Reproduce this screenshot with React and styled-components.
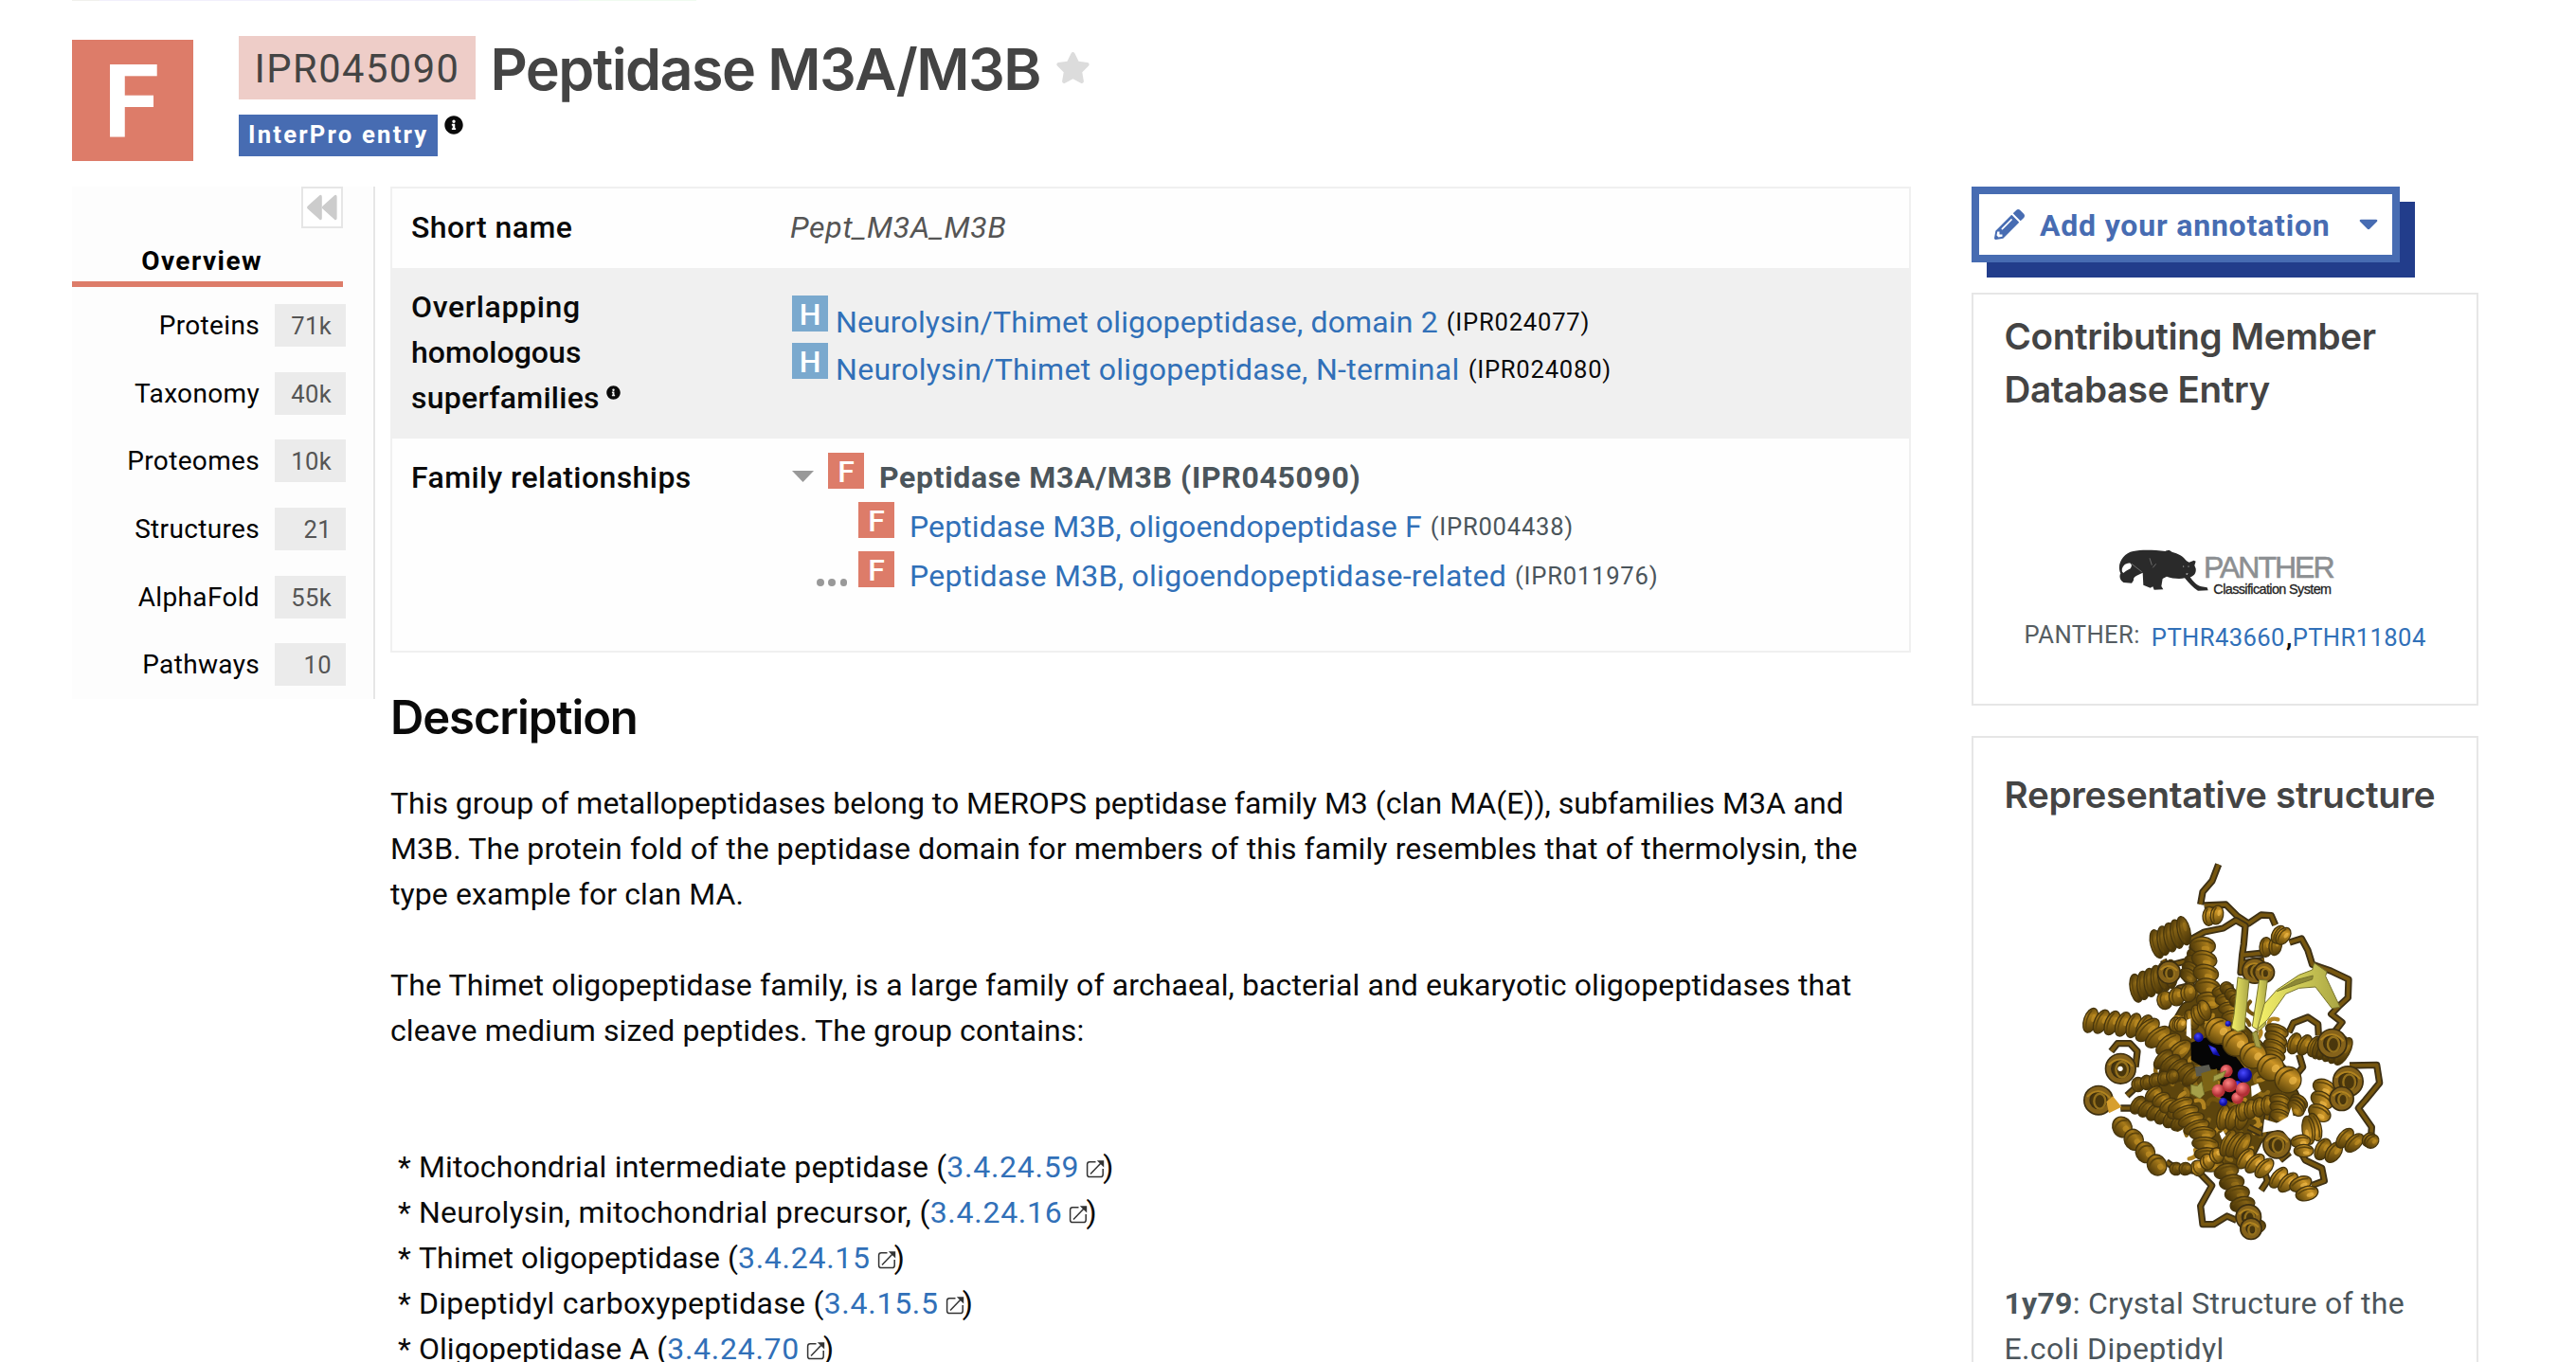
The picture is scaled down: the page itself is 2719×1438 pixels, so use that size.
import React from "react";
import styled, { createGlobalStyle } from "styled-components";
import { FaStar, FaInfoCircle, FaPencilAlt } from "react-icons/fa";

const family = "#dd7c69";
const superfamily = "#7aa9ce";
const link = "#3170b8";
const brand = "#476cb2";
const rule = "#e6e6e6";
const bodyFont = `Roboto, "Liberation Sans", sans-serif`;
const headFont = `Inter, "Liberation Sans", sans-serif`;

const Global = createGlobalStyle`
  * { box-sizing: border-box; }
  body { margin: 0; background: #fff; color: #0a0a0a; overflow: hidden; font: 32px/48px ${bodyFont}; }
  h1, h2, h3, p, ul { margin: 0; padding: 0; }
  ul { list-style: none; }
  a { color: ${link}; text-decoration: none; }
  svg { display: block; flex: none; }
`;

const Page = styled.div`
  height: 1438px;
  overflow: hidden;
  padding-left: 76px;
  white-space: nowrap;
`;
const Strip = styled.div`
  display: flex;
  height: 1px;
`;
const Segment = styled.div`
  width: ${(p) => p.$width}px;
  background: ${(p) => p.$color};
`;

/* Header */
const Header = styled.header`
  display: flex;
  gap: 48px;
  padding-top: 37px;
  margin-bottom: 27px;
`;
const TypeLogo = styled.div`
  width: 128px;
  height: 128px;
  margin-top: 4px;
  padding-right: 3px;
  background: ${family};
  color: #fff;
  font-size: 107px;
  font-weight: 700;
  line-height: 133px;
  text-align: center;
`;
const TitleRow = styled.div`
  display: flex;
  height: 67px;
`;
const Accession = styled.div`
  width: 250px;
  background: #eecdc8;
  color: #444;
  font-size: 41.6px;
  letter-spacing: 0.036em;
  line-height: 70px;
  text-align: center;
`;
const Title = styled.h1`
  margin: 0 16px 0 15.5px;
  color: #444;
  font: 600 61px/71px ${headFont};
  letter-spacing: -0.026em;
`;
const Star = styled(FaStar)`
  width: 37px;
  height: 37px;
  margin-top: 15px;
  color: #dcdcdc;
`;
const SourceRow = styled.div`
  display: flex;
  margin-top: 16px;
`;
const SourceTag = styled.div`
  width: 210px;
  height: 44px;
  padding-left: 10px;
  background: ${brand};
  color: #fff;
  font-size: 25.6px;
  font-weight: 700;
  letter-spacing: 0.087em;
  line-height: 43px;
`;
const Info = styled(FaInfoCircle)`
  width: ${(p) => p.$size}px;
  height: ${(p) => p.$size}px;
  margin: ${(p) => p.$margin};
`;

/* Columns */
const Body = styled.div`
  display: flex;
  align-items: flex-start;
`;
const Sidebar = styled.nav`
  flex: none;
  width: 320px;
  height: 541px;
  border-right: 2px solid ${rule};
  background: #fdfdfd;
`;
const Collapse = styled.button`
  display: flex;
  align-items: center;
  justify-content: center;
  width: 44px;
  height: 44px;
  margin: 0 0 0 242px;
  padding: 0;
  border: 2px solid ${rule};
  background: #fff;
`;
const ActiveTab = styled.div`
  width: 286px;
  height: 62px;
  margin-bottom: 5px;
  padding: 13px 85px 0 0;
  border-bottom: 6px solid ${family};
  color: #000;
  font-size: 28px;
  font-weight: 700;
  letter-spacing: 0.052em;
  line-height: 43px;
  text-align: right;
`;
const Tab = styled.li`
  display: flex;
  align-items: center;
  justify-content: flex-end;
  gap: 16px;
  height: 71.6px;
  padding-right: 29px;
  color: #000;
  font-size: 28px;
  letter-spacing: 0.012em;
  line-height: 49px;
`;
const Badge = styled.span`
  width: 75px;
  height: 45px;
  padding-right: 15px;
  background: #ebebeb;
  color: #555;
  font-size: 25.6px;
  line-height: 47px;
  text-align: right;
`;

const Main = styled.main`
  flex: none;
  width: 1605px;
  margin-left: 16px;
`;
const Table = styled.section`
  border: 2px solid #f0f0f0;
  background: #fefefe;
`;
const Row = styled.div`
  display: grid;
  grid-template-columns: 422px 1fr;
  height: ${(p) => p.$height}px;
  background: ${(p) => (p.$shaded ? "#f0f0f0" : "transparent")};
`;
const Label = styled.div`
  padding: 17px 0 0 20px;
  font-weight: 500;
  letter-spacing: ${(p) => p.$track ?? 0.013}em;
`;
const LabelEnd = styled.span`
  display: flex;
`;
const Value = styled.div`
  padding-top: ${(p) => p.$top}px;
`;
const ShortName = styled.i`
  margin-left: -2px;
  color: #555;
  letter-spacing: 0.022em;
`;
const EntryRow = styled.div`
  display: flex;
  height: ${(p) => p.$height}px;
  line-height: ${(p) => p.$line}px;
`;
const EntryIcon = styled.span`
  flex: none;
  width: 38px;
  height: 38px;
  margin-right: ${(p) => p.$gap}px;
  background: ${(p) => p.$color};
  color: #fff;
  font-size: 32px;
  font-weight: 500;
  line-height: 40px;
  text-align: center;
`;
const Tracked = styled.span`
  letter-spacing: ${(p) => p.$track}em;
`;
const Code = styled.span`
  margin-left: 9px;
  color: ${(p) => p.$color};
  font-size: 25.6px;
  letter-spacing: 0.03em;
`;
const Current = styled.b`
  color: #4b555b;
  letter-spacing: 0.0205em;
`;
const Lead = styled.span`
  display: flex;
  align-items: flex-start;
  gap: 4.5px;
  width: ${(p) => p.$width}px;
  padding: ${(p) => p.$padding};
`;
const Dot = styled.span`
  width: 7.8px;
  height: 7.8px;
  border-radius: 50%;
  background: #999;
`;

const SectionTitle = styled.h2`
  margin: 39px 0 36px 0;
  font: 600 49px/60px ${headFont};
  letter-spacing: -0.023em;
`;
const Paragraph = styled.p`
  margin-bottom: ${(p) => p.$after}px;
`;
const Line = styled.span`
  display: block;
  letter-spacing: ${(p) => p.$track}em;
`;
const Enzyme = styled.li`
  display: flex;
  padding-left: 8px;
  letter-spacing: ${(p) => p.$track}em;
`;
const Asterisk = styled.span`
  width: 22px;
`;
const EcNumber = styled.a`
  letter-spacing: 0.023em;
`;

/* Right column */
const Aside = styled.aside`
  flex: none;
  width: 535px;
  margin-left: 64px;
`;
const Annotate = styled.button`
  display: flex;
  align-items: center;
  width: 452px;
  height: 80px;
  padding: 0 15px 0 16px;
  border: 8px solid ${brand};
  background: #fff;
  box-shadow: 16px 16px 0 #223d8b;
  color: ${brand};
  font: 700 32px/48px ${bodyFont};
  letter-spacing: 0.025em;
`;
const AnnotateText = styled.span`
  flex: 1;
  margin-left: 16px;
  padding-top: 2px;
  text-align: left;
`;
const Card = styled.section`
  height: ${(p) => p.$height}px;
  margin-top: 32px;
  padding: ${(p) => p.$top}px 31px 0 32.5px;
  border: 2px solid ${rule};
`;
const CardTitle = styled.h3`
  color: #444;
  font: 600 38.6px/56px ${headFont};
  letter-spacing: ${(p) => p.$track}em;
`;
const Brand = styled.div`
  display: flex;
  margin: 141px 0 0 119px;
`;
const BrandText = styled.div`
  flex: none;
  width: 135px;
  margin-left: -6px;
  font-family: "Liberation Sans", Arial, sans-serif;
  text-align: right;
`;
const BrandName = styled.div`
  display: flex;
  justify-content: flex-end;
  margin: 2px -2px 0 0;
  color: #8c8f92;
  font-size: 32px;
  line-height: 35px;
  letter-spacing: -2px;
  -webkit-text-stroke: 0.6px #8c8f92;
`;
const BrandSub = styled.div`
  color: #222;
  font-size: 14.4px;
  line-height: 10px;
  letter-spacing: -0.6px;
  -webkit-text-stroke: 0.3px #222;
`;
const Signatures = styled.div`
  display: flex;
  margin: 25px 0 0 21px;
  color: #555d62;
  font-size: 25.6px;
  line-height: 36px;
  letter-spacing: 0.016em;
`;
const SignatureLinks = styled.span`
  padding: 3px 0 0 12px;
`;
const Comma = styled.b`
  margin-left: 1px;
  color: #0a0a0a;
`;
const Structure = styled.div`
  margin: 13px 0 12px 44.5px;
`;
const Caption = styled.p`
  color: #4b555b;
`;

const ExternalIcon = () => (
  <svg width="20" height="48" viewBox="0 0 20 48" fill="none" stroke="#333" strokeWidth="1.5">
    <path d="M10.5 18.7H4.2a2.6 2.6 0 0 0-2.6 2.6v10.6a2.6 2.6 0 0 0 2.6 2.6h11.4a2.6 2.6 0 0 0 2.6-2.6V26" />
    <path d="M5 31.5 16.5 19.5" />
    <path d="M11.8 17.2h7.4v7.4z" fill="#333" stroke="none" />
  </svg>
);
const ExternalBox = styled.span`
  margin: 0 -2px 0 7px;
`;
const Rewind = () => (
  <svg width="34" height="30" viewBox="0 0 34 26" preserveAspectRatio="none" fill="#ccc">
    <path d="M14 2.2C15.200.9 16.800 1.400 16.800 3.200v19.600c0 1.800-1.600 2.300-2.800 1L1.800 14.400c-.9-.8-.9-2 0-2.800z" />
    <path d="M29.800 2.200c1.200-1.300 2.800-.8 2.800 1v19.600c0 1.800-1.600 2.300-2.800 1L17.600 14.400c-.9-.8-.9-2 0-2.800z" />
  </svg>
);
const Caret = () => (
  <svg width="20" height="12" viewBox="0 0 20 12" fill="currentColor">
    <path d="M2 .8h16c1.300 0 1.800 1.200.9 2.200l-7.500 7.600c-.8.8-2 .8-2.800 0L1.100 3C.2 2 .7.8 2 .8z" />
  </svg>
);
const Toggle = () => (
  <svg width="23" height="12" viewBox="0 0 23 12" fill="#999">
    <path d="M0 0h23L11.500 12z" />
  </svg>
);
const Panther = () => (
  <svg width="97" height="44" viewBox="48 34 291 132">
    <path
      fill="#2a2a2a"
      fillRule="evenodd"
      d="M98 40C125 34 165 36 200 40c6-5 15-4 20 2 20 5 37 14 47 29l8 4 15-6 6 3-4 13 4 10c2 14-6 24-18 27 10 14 22 27 36 30l18 3 3 9-32 1c-16-9-28-24-42-40-18 4-40 1-57-5l-13 7-4 24 6 10-29 1-4-10-8 4-22-9-2-39-16 8c-9 5-14 8-13 16l-6 9-26-2c-12-8-14-20-9-29C44 82 66 46 98 40zM63 105c-4-14 10-30 26-27 6 5 4 11 0 17-7 4-15 8-22 14z"
    />
    <g stroke="#bbb" strokeWidth="1.400" fill="none">
      <path d="m93 80 32 25M150 62l7 22M160 92l10-12" />
    </g>
    <g fill="#ddd">
      <circle cx="257" cy="88" r="1.800" />
      <circle cx="273" cy="88" r="1.800" />
      <path d="m264 111 8-1-4 5z" />
    </g>
  </svg>
);

/* Ribbon drawing: [x1, y1, x2, y2, width, turns, shade] */
const helices = [
  [350, 350, 435, 308, 92, 4, 0], [285, 490, 395, 445, 90, 5, 0], [375, 528, 450, 505, 58, 2, 1],
  [480, 370, 450, 450, 60, 4, 0], [495, 355, 515, 530, 80, 4, 1], [140, 592, 310, 612, 80, 5, 1],
  [320, 622, 420, 690, 92, 3, 1], [560, 500, 590, 580, 70, 3, 1], [460, 590, 500, 560, 66, 2, 1],
  [570, 490, 600, 530, 40, 2, 0], [370, 715, 460, 770, 75, 4, 0], [290, 795, 400, 770, 46, 4, 0],
  [290, 860, 420, 915, 62, 5, 0], [340, 825, 410, 880, 60, 3, 1], [425, 860, 475, 930, 84, 3, 1],
  [495, 950, 520, 1050, 84, 3, 1], [480, 1060, 540, 1020, 50, 2, 2], [570, 1070, 655, 1245, 78, 5, 0],
  [560, 900, 620, 900, 80, 2, 1], [620, 880, 700, 860, 62, 3, 1], [740, 845, 740, 895, 66, 2, 1],
  [575, 980, 620, 990, 90, 2, 1], [630, 1030, 690, 1060, 74, 2, 2], [735, 1090, 765, 1105, 76, 1, 2],
  [805, 1110, 825, 1140, 72, 1, 2], [240, 930, 350, 1050, 60, 3, 1], [410, 1062, 440, 1062, 40, 1, 0],
  [730, 625, 720, 700, 74, 3, 1], [785, 665, 850, 675, 68, 2, 1], [870, 670, 940, 690, 96, 4, 0],
  [695, 360, 725, 355, 62, 1, 1], [735, 320, 750, 325, 60, 1, 2], [800, 850, 790, 870, 60, 2, 1],
  [880, 805, 865, 885, 74, 2, 2], [850, 930, 830, 940, 90, 1, 2], [805, 975, 815, 1005, 62, 1, 2],
  [875, 1000, 910, 1010, 72, 1, 1], [945, 965, 975, 980, 72, 1, 1], [1022, 970, 1030, 975, 48, 1, 1],
  [410, 605, 425, 605, 46, 1, 2],
];
const frontHelices = [
  [515, 262, 540, 258, 60, 1, 2], [545, 625, 765, 780, 84, 4, 2],
];
const loops = [
  "M545 98 525 150 495 185 488 225M500 228 568 225 605 262 640 285 680 258 712 260 725 290",
  "M440 345 500 312 560 300 600 275 630 292 625 350 620 385 690 378M620 385 615 440 640 440M615 440 625 410 690 400",
  "M770 345 808 333 828 370 842 415 900 435 957 462 955 520 925 548 902 572 936 598 915 625",
  "M768 630 782 600 828 582 860 604 862 640",
  "M960 735 1046 733 1055 790 1010 845 988 870 1030 930 1028 960",
  "M800 1000 820 1035 872 1060 880 1100 840 1115M770 1010 740 1035",
  "M480 1070 524 1115 488 1180 495 1238 530 1238 572 1212 602 1225",
  "M380 1040 410 1062 480 1070M235 870 300 870M255 830 310 780",
  "M370 400 380 420 440 405M425 440 460 480 420 490 450 520",
  "M690 1070 700 1100 680 1130M800 700 812 740 795 760M690 960 702 870M640 930 680 950",
  "M205 690 225 665 265 665 288 690 282 740",
];
const coils = [
  [235, 745, 38], [165, 845, 36], [388, 440, 26], [660, 435, 30], [690, 440, 22],
  [730, 985, 34], [955, 785, 38], [905, 665, 36], [935, 840, 28], [640, 1215, 30], [648, 1252, 24],
];
const strands = Array.from({ length: 90 }, (_, i) => {
  const t = i * 2.399963;
  const r = Math.sqrt(i / 90);
  const x = 560 + Math.cos(t) * r * 215;
  const y = 770 + Math.sin(t) * r * 270;
  const a = i * 1.7;
  return `M${x.toFixed(0)} ${y.toFixed(0)}q${(26 * Math.cos(a)).toFixed(0)} ${(26 * Math.sin(a)).toFixed(0)} ${(34 * Math.cos(a + 1)).toFixed(0)} ${(34 * Math.sin(a + 1)).toFixed(0)}`;
});
const Spring = ({ data: [x1, y1, x2, y2, w, turns, shade] }) => {
  const angle = (Math.atan2(y2 - y1, x2 - x1) * 180) / Math.PI;
  const length = Math.hypot(x2 - x1, y2 - y1);
  const step = length / turns;
  const rx = Math.max(step * 0.62, 20);
  return (
    <g transform={`translate(${x1} ${y1}) rotate(${angle})`}>
      {Array.from({ length: turns + 1 }, (_, i) => (
        <g key={i} transform={`translate(${i * step} 0) rotate(${12 + ((i * 7) % 9)})`}>
          <ellipse rx={rx} ry={w / 2} fill={`url(#gold${shade})`} stroke="#46350d" strokeWidth="4" />
          <path d={`M${-rx * 0.3} ${-w * 0.4}Q${-rx * 0.9} 0 ${-rx * 0.2} ${w * 0.4}`} fill="none" stroke="#5f460c" strokeWidth="5" />
          <ellipse cx={rx * 0.3} cy={-w * 0.12} rx={rx * 0.28} ry={w * 0.16} fill={shade === 2 ? "#f6c150" : "#c99626"} opacity={shade ? 0.6 : 0.3} />
        </g>
      ))}
    </g>
  );
};
const Protein = () => (
  <svg width="400" height="460" viewBox="0 0 1200 1380">
    <defs>
      {[["#3f2d07", "#866315", "#4c3708"], ["#503a09", "#a87b1a", "#5b420b"], ["#6d4e0d", "#cc9526", "#6b4f0d"]].map((c, i) => (
        <linearGradient key={i} id={`gold${i}`} x1="0" y1="0" x2=".3" y2="1">
          <stop offset="0" stopColor={c[0]} />
          <stop offset=".4" stopColor={c[1]} />
          <stop offset="1" stopColor={c[2]} />
        </linearGradient>
      ))}
      <linearGradient id="sheet">
        <stop offset="0" stopColor="#f5f169" />
        <stop offset="1" stopColor="#a9a544" />
      </linearGradient>
      <radialGradient id="oxygen" cx=".4" cy=".35">
        <stop offset="0" stopColor="#ff8585" />
        <stop offset="1" stopColor="#b22f35" />
      </radialGradient>
      <radialGradient id="nitrogen" cx=".4" cy=".35">
        <stop offset="0" stopColor="#4a4aff" />
        <stop offset="1" stopColor="#0c0ca0" />
      </radialGradient>
    </defs>
    <path
      fill="#5d450d"
      stroke="#3d2f10"
      strokeWidth="5"
      d="m430 540 60-30 100-30 20 110 150 150 50 110-20 40-50 10-60 80-30 60-80 20-70-40-40-80-70-80-50-50 30-90-10-60z"
    />
    <g fill="none" strokeLinecap="round">
      {strands.map((d, i) => (
        <path key={d} d={d} stroke={["#8c6816", "#b28420", "#74550f"][i % 3]} strokeWidth="13" />
      ))}
    </g>
    <g fill="none" strokeLinejoin="round">
      {loops.map((d) => (
        <g key={d}>
          <path d={d} stroke="#3d3015" strokeWidth="22" />
          <path d={d} stroke="#76560f" strokeWidth="11" />
        </g>
      ))}
    </g>
    {helices.map((h) => (
      <Spring key={h.join()} data={h} />
    ))}
    <g>
      {coils.map(([x, y, r]) => (
        <g key={`${x},${y}`} fill="none">
          <circle cx={x} cy={y} r={r} fill="#4a370c" stroke="#3d2f10" strokeWidth="24" />
          <circle cx={x} cy={y} r={r} stroke="#85621a" strokeWidth="14" />
          <ellipse cx={x + 4} cy={y + 3} rx={r * 0.5} ry={r * 0.66} stroke="#94701c" strokeWidth="7" />
          <path d={`M${x - r} ${y - r * 0.3}Q${x} ${y - r * 1.3} ${x + r} ${y - r * 0.2}`} stroke="#b0831f" strokeWidth="6" />
        </g>
      ))}
    </g>
    <circle cx="234" cy="745" r="8" fill="#fff" />
    <path fill="#d79f2e" d="m190 850 20-18 28 34-40 20z" />
    <path fill="#050505" d="m458 662 60-20 70 50 40 50-10 90-30 20-45-20 15-80-60-10-40-25z" />
    <path fill="#5b5b50" d="m470 740 45-8 10 30-50 8z" />
    <path fill="#7c6416" d="m490 760 50-15 5 60-45 15z" />
    <path fill="#fff" d="m445 590 12-4 2 64-16-10zM648 800l22-8 10 24-30 18zM548 950l12-8 8 14-12 14zM690 905l40 12 35-20 10-30 10 40-15 60-25-30-60 10z" />
    {frontHelices.map((h) => (
      <Spring key={h.join()} data={h} />
    ))}
    <g fill="url(#nitrogen)">
      <circle cx="628" cy="765" r="23" />
      <circle cx="482" cy="646" r="15" />
      <path d="m512 668 24 12 14 26-22-6z" />
      <circle cx="575" cy="602" r="9" />
      <circle cx="606" cy="795" r="12" />
      <circle cx="560" cy="850" r="13" />
    </g>
    <g fill="url(#oxygen)">
      <circle cx="570" cy="752" r="20" />
      <circle cx="545" cy="815" r="21" />
      <circle cx="605" cy="838" r="19" />
      <circle cx="622" cy="811" r="23" />
      <circle cx="580" cy="797" r="23" />
    </g>
    <g fill="url(#sheet)" stroke="#77732c" strokeWidth="3">
      <path d="m606 455 36 10-12 120-2 35-22 8-20-12 8-42z" />
      <path d="m674 463 26 2-8 62 2 80-20 18-22-14 8-54z" />
      <path d="M668 620 690 540 730 495 800 448 842 432 848 410 888 438 884 452 930 550 904 554 852 486 800 490 758 508 700 590z" />
      <path d="m652 632 14-6 14 54-18-6zM530 768l38-16-8 20-32 14zM458 796l20 4 14-14 8 40-14 14-28-16z" fill="#a5a04a" />
      <path d="m730 500 60-36 54-14-2 12-48 16z" fill="#8d8936" />
    </g>
  </svg>
);

const tabs = [["Proteins", "71k"], ["Taxonomy", "40k"], ["Proteomes", "10k"], ["Structures", "21"], ["AlphaFold", "55k"], ["Pathways", "10"]];
const superfamilies = [
  ["Neurolysin/Thimet oligopeptidase, domain 2", "(IPR024077)", 0.0045],
  ["Neurolysin/Thimet oligopeptidase, N-terminal", "(IPR024080)", 0.0095],
];
const enzymes = [
  ["Mitochondrial intermediate peptidase", "3.4.24.59", 0.0055],
  ["Neurolysin, mitochondrial precursor,", "3.4.24.16", 0.0085],
  ["Thimet oligopeptidase", "3.4.24.15", 0],
  ["Dipeptidyl carboxypeptidase", "3.4.15.5", 0.0085],
  ["Oligopeptidase A", "3.4.24.70", 0.001],
];

export default function App() {
  return (
    <Page>
      <Global />
      <Strip>
        <Segment $width={29} $color="#f0f0ec" />
        <Segment $width={506} $color="#f1effc" />
        <Segment $width={124} $color="#effbef" />
      </Strip>
      <Header>
        <TypeLogo>F</TypeLogo>
        <div>
          <TitleRow>
            <Accession>IPR045090</Accession>
            <Title>Peptidase M3A/M3B</Title>
            <Star />
          </TitleRow>
          <SourceRow>
            <SourceTag>InterPro entry</SourceTag>
            <Info $size={20} $margin="1px 0 0 7px" />
          </SourceRow>
        </div>
      </Header>
      <Body>
        <Sidebar>
          <Collapse><Rewind /></Collapse>
          <ActiveTab>Overview</ActiveTab>
          <ul>
            {tabs.map(([name, count]) => (
              <Tab key={name}>{name}<Badge>{count}</Badge></Tab>
            ))}
          </ul>
        </Sidebar>
        <Main>
          <Table>
            <Row $height={84}>
              <Label>Short name</Label>
              <Value $top={17}><ShortName>Pept_M3A_M3B</ShortName></Value>
            </Row>
            <Row $height={180} $shaded>
              <Label $track={0.008}>
                <Tracked $track={0.02}>Overlapping</Tracked><br />
                <Tracked $track={0.002}>homologous</Tracked>
                <LabelEnd>superfamilies<Info $size={15} $margin="11px 0 0 7px" /></LabelEnd>
              </Label>
              <Value $top={29}>
                {superfamilies.map(([name, code, track]) => (
                  <EntryRow key={code} $height={50} $line={56}>
                    <EntryIcon $color={superfamily} $gap={8}>H</EntryIcon>
                    <Tracked as="a" $track={track}>{name}</Tracked>
                    <Code $color="#0a0a0a">{code}</Code>
                  </EntryRow>
                ))}
              </Value>
            </Row>
            <Row $height={224}>
              <Label>Family relationships</Label>
              <Value $top={15}>
                <EntryRow $height={52} $line={52}>
                  <Lead $width={38} $padding="19px 0 0 0"><Toggle /></Lead>
                  <EntryIcon $color={family} $gap={16}>F</EntryIcon>
                  <Current>Peptidase M3A/M3B (IPR045090)</Current>
                </EntryRow>
                <EntryRow $height={52} $line={52}>
                  <Lead $width={70} />
                  <EntryIcon $color={family} $gap={16}>F</EntryIcon>
                  <Tracked as="a" $track={0.0035}>Peptidase M3B, oligoendopeptidase F</Tracked>
                  <Code $color="#4b555b">(IPR004438)</Code>
                </EntryRow>
                <EntryRow $height={52} $line={52}>
                  <Lead $width={70} $padding="29px 0 0 26px"><Dot /><Dot /><Dot /></Lead>
                  <EntryIcon $color={family} $gap={16}>F</EntryIcon>
                  <Tracked as="a" $track={0.009}>Peptidase M3B, oligoendopeptidase-related</Tracked>
                  <Code $color="#4b555b">(IPR011976)</Code>
                </EntryRow>
              </Value>
            </Row>
          </Table>
          <SectionTitle>Description</SectionTitle>
          <Paragraph $after={48}>
            <Line $track={-0.0005}>This group of metallopeptidases belong to MEROPS peptidase family M3 (clan MA(E)), subfamilies M3A and</Line>
            <Line $track={0.0038}>M3B. The protein fold of the peptidase domain for members of this family resembles that of thermolysin, the</Line>
            <Line $track={0.003}>type example for clan MA.</Line>
          </Paragraph>
          <Paragraph $after={96}>
            <Line $track={0.0035}>The Thimet oligopeptidase family, is a large family of archaeal, bacterial and eukaryotic oligopeptidases that</Line>
            <Line $track={0.0035}>cleave medium sized peptides. The group contains:</Line>
          </Paragraph>
          <ul>
            {enzymes.map(([name, ec, track]) => (
              <Enzyme key={ec} $track={track}>
                <Asterisk>*</Asterisk>
                {name}&nbsp;(
                <EcNumber>{ec}</EcNumber>
                <ExternalBox><ExternalIcon /></ExternalBox>)
              </Enzyme>
            ))}
          </ul>
        </Main>
        <Aside>
          <Annotate>
            <FaPencilAlt size={32} />
            <AnnotateText>Add your annotation</AnnotateText>
            <Caret />
          </Annotate>
          <Card $height={436} $top={16}>
            <CardTitle $track={-0.0095}>Contributing Member<br />Database Entry</CardTitle>
            <Brand>
              <Panther />
              <BrandText>
                <BrandName>PANTHER</BrandName>
                <BrandSub>Classification System</BrandSub>
              </BrandText>
            </Brand>
            <Signatures>
              PANTHER:
              <SignatureLinks><a>PTHR43660</a><Comma>,</Comma><a>PTHR11804</a></SignatureLinks>
            </Signatures>
          </Card>
          <Card $height={760} $top={32}>
            <CardTitle $track={-0.007}>Representative structure</CardTitle>
            <Structure><Protein /></Structure>
            <Caption>
              <Line $track={0.008}><b>1y79</b>: Crystal Structure of the</Line>
              <Line $track={0.011}>E.coli Dipeptidyl</Line>
            </Caption>
          </Card>
        </Aside>
      </Body>
    </Page>
  );
}
